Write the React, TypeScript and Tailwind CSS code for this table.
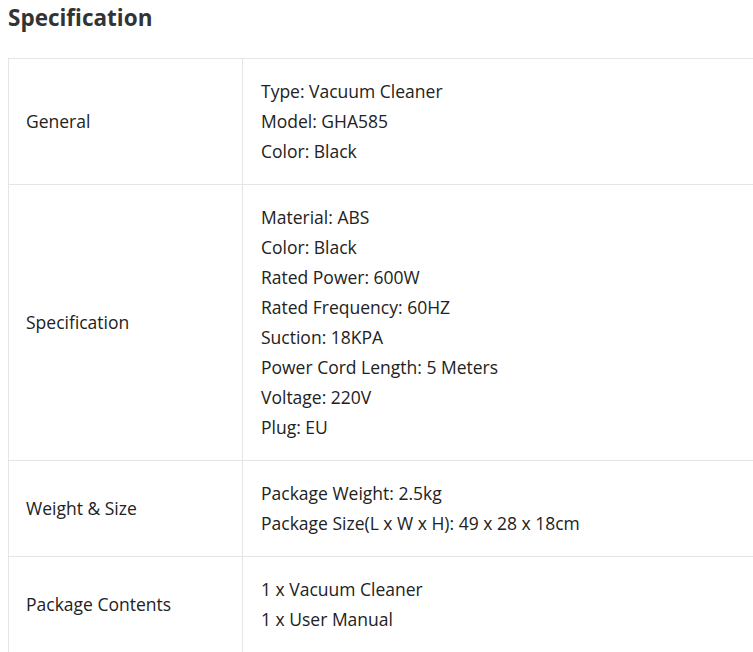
const rows: { label: string; items: string[] }[] = [
  { label: "General", items: ["Type: Vacuum Cleaner", "Model: GHA585", "Color: Black"] },
  {
    label: "Specification",
    items: [
      "Material: ABS",
      "Color: Black",
      "Rated Power: 600W",
      "Rated Frequency: 60HZ",
      "Suction: 18KPA",
      "Power Cord Length: 5 Meters",
      "Voltage: 220V",
      "Plug: EU",
    ],
  },
  { label: "Weight & Size", items: ["Package Weight: 2.5kg", "Package Size(L x W x H): 49 x 28 x 18cm"] },
  { label: "Package Contents", items: ["1 x Vacuum Cleaner", "1 x User Manual"] },
]

export default function App() {
  return (
    <div className="w-[753px] h-[652px] overflow-hidden bg-white font-['Open_Sans',sans-serif] text-[#222]">
      <h2 className="pl-2 pt-[3px] text-[22.5px] leading-[30px] font-bold text-[#333]">Specification</h2>
      <table className="ml-2 mt-[25px] w-[780px] border-collapse text-[17.5px] leading-[30px]">
        <tbody>
          {rows.map((r) => (
            <tr key={r.label}>
              <td className="w-[234px] border border-[#e5e5e5] pl-[17px] pt-[16.5px] pb-[18.5px] align-middle">{r.label}</td>
              <td className="border border-[#e5e5e5] pl-[18px] pt-[16.5px] pb-[18.5px]">
                {r.items.map((it) => (
                  <div key={it}>{it}</div>
                ))}
              </td>
            </tr>
          ))}
        </tbody>
      </table>
    </div>
  )
}
